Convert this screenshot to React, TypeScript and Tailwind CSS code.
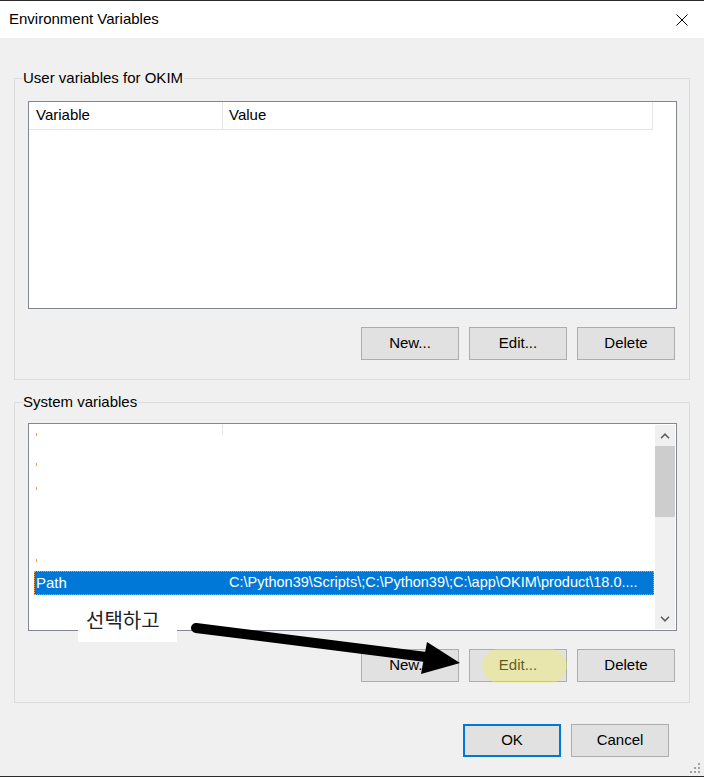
import type { ReactNode } from "react";

const UI_FONT = "font-['Liberation_Sans',Arial,sans-serif]";

function Btn({ children, primary }: { children: ReactNode; primary?: boolean }) {
  return (
    <button
      type="button"
      className={
        primary
          ? "flex h-[33px] w-[98px] items-center justify-center border-2 border-[#0078d7] bg-[#e1e1e1] text-[15px] text-black"
          : "flex h-[33px] w-[98px] items-center justify-center border border-[#adadad] bg-[#e1e1e1] text-[15px] text-black"
      }
    >
      {children}
    </button>
  );
}

function ButtonRow() {
  return (
    <div className="mr-[2px] mt-[18px] flex justify-end gap-[10px]">
      <Btn>New...</Btn>
      <Btn>Edit...</Btn>
      <Btn>Delete</Btn>
    </div>
  );
}

function Chevron({ up }: { up?: boolean }) {
  return (
    <svg width="10" height="6" viewBox="0 0 10 6">
      <path
        d={up ? "M1 5.2 L5 1.2 L9 5.2" : "M1 0.8 L5 4.8 L9 0.8"}
        fill="none"
        stroke="#606060"
        strokeWidth="1.6"
      />
    </svg>
  );
}

function Mark({ mt }: { mt: string }) {
  return <div className={`ml-[7px] h-[3px] w-[1px] bg-[#f0a040] ${mt}`} />;
}

export default function App() {
  return (
    <div
      className={`relative flex h-[777px] w-[704px] flex-col overflow-hidden border-y border-[#2b2b2b] bg-[#f0f0f0] text-[15px] text-black ${UI_FONT}`}
    >
      {/* title bar */}
      <div className="flex h-[37px] items-center justify-between bg-white pl-[9px] pr-[16px]">
        <span>Environment Variables</span>
        <svg width="12" height="12" viewBox="0 0 12 12">
          <path d="M0.5 0.5 L11.5 11.5 M11.5 0.5 L0.5 11.5" stroke="#000" strokeWidth="1" />
        </svg>
      </div>

      <div className="px-[14px]">
        {/* user variables */}
        <fieldset className="m-0 mt-[32px] min-w-0 border border-[#dcdcdc] pb-[19px] pl-[13px] pr-[12px] pt-[15px]">
          <legend className="-ml-[5px] pr-[1px] leading-[16px]">User variables for OKIM</legend>
          <div className="h-[208px] border border-[#828790] bg-white">
            <div className="flex h-[28px] w-[624px] border-b border-[#e5e5e5]">
              <div className="flex w-[194px] items-center border-r border-[#e5e5e5] pl-[7px]">Variable</div>
              <div className="flex w-[430px] items-center border-r border-[#e5e5e5] pl-[6px]">Value</div>
            </div>
          </div>
          <ButtonRow />
        </fieldset>

        {/* system variables */}
        <fieldset className="m-0 mt-[14px] min-w-0 border border-[#dcdcdc] pb-[20px] pl-[13px] pr-[12px] pt-[13px]">
          <legend className="-ml-[5px] pr-[1px] leading-[16px]">System variables</legend>
          <div className="flex h-[208px] border border-[#828790] bg-white">
            <div className="flex flex-1 flex-col">
              <div className="flex h-[24px] items-start">
                <div className="ml-[7px] mt-[9px] h-[3px] w-[1px] bg-[#f0a040]" />
                <div className="ml-[185px] mt-px h-[10px] w-px bg-[#e5e5e5]" />
              </div>
              <Mark mt="mt-[15px]" />
              <Mark mt="mt-[21px]" />
              <Mark mt="mt-[69px]" />
              <div className="ml-[5px] mr-[1px] mt-[9px] flex h-[24px] items-center border border-dotted border-[#f0a040] bg-[#0078d7] text-white">
                <span className="w-[194px] shrink-0 pl-[1px]">Path</span>
                <span className="overflow-hidden whitespace-nowrap text-[14.5px]">
                  {"C:\\Python39\\Scripts\\;C:\\Python39\\;C:\\app\\OKIM\\product\\18.0...."}
                </span>
              </div>
            </div>
            <div className="my-px mr-px flex w-[20px] flex-col bg-[#f0f0f0]">
              <div className="flex h-[21px] items-center justify-center">
                <Chevron up />
              </div>
              <div className="h-[71px] bg-[#cdcdcd]" />
              <div className="flex-1" />
              <div className="flex h-[21px] items-center justify-center">
                <Chevron />
              </div>
            </div>
          </div>
          <ButtonRow />
        </fieldset>

        {/* dialog buttons */}
        <div className="mt-[21px] flex justify-end gap-[10px] pr-[21px]">
          <Btn primary>OK</Btn>
          <Btn>Cancel</Btn>
        </div>
      </div>

      {/* resize grip */}
      <svg className="absolute bottom-[2px] right-[3px]" width="12" height="12" viewBox="0 0 12 12">
        <g fill="#a0a0a0">
          <rect x="9" y="1" width="2" height="2" />
          <rect x="5" y="5" width="2" height="2" />
          <rect x="9" y="5" width="2" height="2" />
          <rect x="1" y="9" width="2" height="2" />
          <rect x="5" y="9" width="2" height="2" />
          <rect x="9" y="9" width="2" height="2" />
        </g>
      </svg>

      {/* annotation: highlight over Edit... */}
      <div className="absolute left-[482px] top-[648px] h-[34px] w-[85px] rounded-full bg-[rgba(245,240,90,0.38)]" />

      {/* annotation: label */}
      <div className="absolute left-[78px] top-[604px] h-[37px] w-[99px] bg-white pl-[8px] pt-[2px] font-['Noto_Sans_CJK_KR',sans-serif] text-[20px] leading-[26px] text-[#222]">
        선택하고
      </div>

      {/* annotation: arrow */}
      <svg className="absolute left-[180px] top-[609px]" width="300" height="80" viewBox="0 0 300 80">
        <line x1="16" y1="18" x2="246" y2="47" stroke="#000" strokeWidth="10" strokeLinecap="round" />
        <polygon points="247,32 280,53 241,64" fill="#000" />
      </svg>
    </div>
  );
}
